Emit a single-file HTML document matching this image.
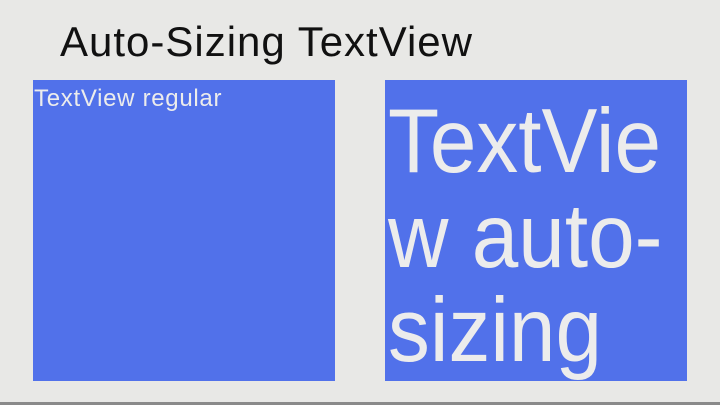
<!DOCTYPE html>
<html><head><style>
html,body{margin:0;padding:0}
body{width:720px;height:405px;background:#e8e8e6;position:relative;overflow:hidden;font-family:"Liberation Sans",sans-serif}
.t{position:absolute;white-space:nowrap;line-height:1}
.r{transform:scaleX(0.92);transform-origin:0 0}
.box{position:absolute;top:80px;width:302px;height:301px;background:#5171ea}
#line{position:absolute;left:0;top:402px;width:720px;height:3px;background:#8a8a8a}
</style></head><body>
<div class="t" style="left:60px;top:21px;font-size:42px;color:#111;letter-spacing:1px">Auto-Sizing TextView</div>
<div class="box" style="left:33px"></div>
<div class="box" style="left:385px"></div>
<div class="t" style="left:34px;top:87px;font-size:24px;color:#ececec;letter-spacing:0.7px">TextView regular</div>
<div class="t r" style="left:388px;top:96px;font-size:91px;color:#ececec">TextVie</div>
<div class="t r" style="left:388px;top:191px;font-size:91px;color:#ececec">w auto-</div>
<div class="t r" style="left:388px;top:285px;font-size:91px;color:#ececec">sizing</div>
<div id="line"></div>
</body></html>
